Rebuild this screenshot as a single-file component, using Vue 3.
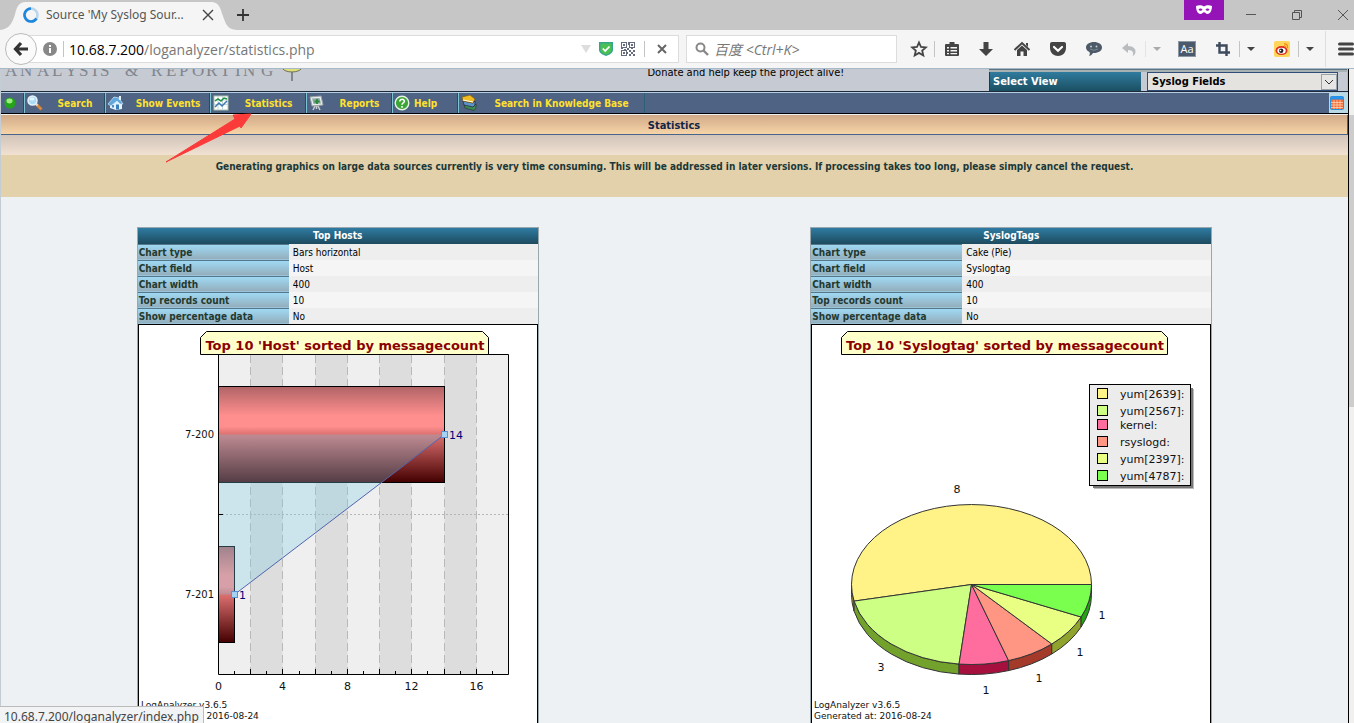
<script setup>
import { ref } from 'vue'

const path = ref('/loganalyzer/statistics.php')
const query = ref('')
const view = ref('Syslog Fields')

const menu = [
  { label: 'Search', icon: 'search', cls: 'w-search' },
  { label: 'Show Events', icon: 'home', cls: 'w-events' },
  { label: 'Statistics', icon: 'stats', cls: 'w-stats' },
  { label: 'Reports', icon: 'report', cls: 'w-reports' },
  { label: 'Help', icon: 'help', cls: 'w-help' },
  { label: 'Search in Knowledge Base', icon: 'books', cls: 'w-kb' },
]

const rows = (type, field) => [
  ['Chart type', type],
  ['Chart field', field],
  ['Chart width', '400'],
  ['Top records count', '10'],
  ['Show percentage data', 'No'],
]
const hostRows = rows('Bars horizontal', 'Host')
const tagRows = rows('Cake (Pie)', 'Syslogtag')

const logo = 'ANALYSIS & REPORTING'
const logoX = [4, 19, 36, 51, 64, 78, 91, 99, 110, 124, 140, 150, 165, 178, 191, 205, 219, 234, 242, 260].join(' ')

const unit = (n) => Math.round(80 + (n * 290) / 18) + 0.5
const bands = [2, 6, 10, 14].map((n) => ({ x: unit(n), w: unit(n + 2) - unit(n) }))
const gridLines = [2, 4, 6, 8, 10, 12, 14, 16].map(unit)
const ticks = Array.from({ length: 17 }, (_, i) => ({ x: unit(i + 1), h: (i + 1) % 2 ? 3 : 5 }))
const axis = [0, 4, 8, 12, 16]

const tags = [
  { name: 'yum[2639]:', n: 8, fill: '#fff388', side: '#a89a34', y: 70, lx: 146, ly: 169 },
  { name: 'yum[2567]:', n: 3, fill: '#ccff83', side: '#72a12c', y: 87, lx: 70, ly: 347 },
  { name: 'kernel:', n: 1, fill: '#ff6d9e', side: '#a5103f', y: 101, lx: 175, ly: 370 },
  { name: 'rsyslogd:', n: 1, fill: '#ff9583', side: '#a33a2a', y: 118, lx: 228, ly: 358 },
  { name: 'yum[2397]:', n: 1, fill: '#e8ff83', side: '#90a32c', y: 135, lx: 269, ly: 332 },
  { name: 'yum[4787]:', n: 1, fill: '#7bff4f', side: '#22a311', y: 152, lx: 291, ly: 295 },
]
const point = (deg, drop = 0) => {
  const a = (deg * Math.PI) / 180
  return `${(160.5 + 120 * Math.cos(a)).toFixed(1)} ${(260.5 - 80 * Math.sin(a) + drop).toFixed(1)}`
}
let at = 0
const slices = tags.map((t) => {
  const from = at
  at += (t.n / 15) * 360
  const to = at
  const big = to - from > 180 ? 1 : 0
  const low = Math.max(from, 180)
  return {
    fill: t.fill,
    sideFill: t.side,
    top: `M160.5 260.5 L${point(from)} A120 80 0 ${big} 0 ${point(to)} Z`,
    side: `M${point(low)} A120 80 0 0 0 ${point(to)} L${point(to, 10)} A120 80 0 0 1 ${point(low, 10)} Z`,
  }
})
</script>

<template>
  <div class="window">
    <header class="tabs">
      <div class="tab">
        <svg class="tab-shape" viewBox="0 0 240 29" preserveAspectRatio="none" aria-hidden="true">
          <path d="M0 29C9 28 12 23 15 14C17 6 19 1 26 1H214C221 1 223 6 225 13C229 24 230 28 240 29Z" fill="#f5f5f5" />
        </svg>
        <svg class="ring" viewBox="0 0 16 16" width="16" height="16" aria-hidden="true">
          <circle cx="8" cy="8" r="6.5" fill="none" stroke="#b9d6ec" stroke-width="2.6" />
          <path d="M8 1.5A6.5 6.5 0 1 0 13.5 11.5" fill="none" stroke="#1c86e0" stroke-width="2.6" />
        </svg>
        <span class="tab-title">Source 'My Syslog Sour...</span>
        <button class="plain tab-close" aria-label="Close tab">
          <svg viewBox="0 0 12 12" width="12" height="12"><path d="M1 1L11 11M11 1L1 11" stroke="#444" stroke-width="1.4" /></svg>
        </button>
      </div>
      <button class="plain new-tab" aria-label="New tab">
        <svg viewBox="0 0 12 12" width="12" height="12"><path d="M6 0V12M0 6H12" stroke="#333" stroke-width="1.8" /></svg>
      </button>
      <div class="mask">
        <svg viewBox="0 0 16 10" width="16" height="10"><path fill="#fff" fill-rule="evenodd" d="M0 1C3-.3 6 .2 8 1.6C10 .2 13-.3 16 1C16 5 14.500 9 11.500 9C9.800 9 9 7.300 8 7.300S6.200 9 4.500 9C1.500 9 0 5 0 1ZM2.500 4.500C3.500 6.200 5.500 6 6.500 4.800C5.500 3 3.500 3 2.500 4.500ZM9.500 4.800C10.500 6 12.500 6.200 13.500 4.500C12.500 3 10.500 3 9.500 4.800Z" /></svg>
      </div>
      <button class="plain win" aria-label="Minimize"><svg viewBox="0 0 12 12" width="12" height="12"><path d="M1 5.500H11" stroke="#555" /></svg></button>
      <button class="plain win" aria-label="Restore"><svg viewBox="0 0 12 12" width="12" height="12"><path d="M1.500 3.500H8.500V10.500H1.500ZM3.500 3V1.500H10.500V8.500H9" fill="none" stroke="#555" /></svg></button>
      <button class="plain win" aria-label="Close"><svg viewBox="0 0 12 12" width="12" height="12"><path d="M1 1L11 11M11 1L1 11" stroke="#555" /></svg></button>
    </header>

    <div class="toolbar">
      <button class="back" aria-label="Back">
        <svg viewBox="0 0 16 16" width="16" height="16"><path d="M8 2L2.500 8L8 14M3 8H15" fill="none" stroke="#333" stroke-width="3.200" /></svg>
      </button>
      <form class="url" @submit.prevent>
        <svg class="info" viewBox="0 0 14 14" width="14" height="14" aria-hidden="true"><circle cx="7" cy="7" r="7" fill="#888" /><path d="M7 6V11M7 3V5" stroke="#fff" stroke-width="2" /></svg>
        <i class="bar"></i>
        <label for="url">10.68.7.200</label>
        <input id="url" v-model="path" type="text" />
        <svg class="drop" viewBox="0 0 10 8" width="10" height="8" aria-hidden="true"><path d="M0 0H10L5 8Z" fill="#ddd" /></svg>
        <svg class="shield" viewBox="0 0 14 14" width="14" height="14" aria-hidden="true"><path d="M0 0H14V8C14 11 10 13 7 14C4 13 0 11 0 8Z" fill="#35a58b" /><path d="M1.500 1.500H12.500V8C12.500 10 9.500 12 7 12.500C4.500 12 1.500 10 1.500 8Z" fill="#4cc054" /><path d="M3.800 6.500L6.200 9L10.500 4.500" fill="none" stroke="#fff" stroke-width="1.800" /></svg>
        <svg class="qr" viewBox="0 0 14 14" width="14" height="14" shape-rendering="crispEdges" aria-hidden="true">
          <path d="M.5.5H5.500V5.500H.5ZM8.500.5H13.500V5.500H8.500ZM.5 8.500H5.500V13.500H.5Z" fill="none" stroke="#666c7c" />
          <path d="M2 2h2v2h-2zM10 2h2v2h-2zM2 10h2v2h-2zM7 0h1v3h-1zM6 6h2v2h-2zM0 6h2v1h-2zM3 7h2v1h-2zM8 8h2v2h-2zM12 8h2v2h-2zM10 10h2v2h-2zM8 12h2v2h-2zM12 12h2v2h-2zM10 6h2v1h-2zM6 10h1v2h-1z" fill="#666c7c" />
        </svg>
        <i class="bar"></i>
        <button class="plain stop" aria-label="Stop"><svg viewBox="0 0 10 10" width="10" height="10"><path d="M1 1L9 9M9 1L1 9" stroke="#666" stroke-width="2" /></svg></button>
      </form>
      <form class="find" @submit.prevent>
        <svg viewBox="0 0 14 14" width="14" height="14" aria-hidden="true"><circle cx="5.500" cy="5.500" r="4" fill="none" stroke="#888" stroke-width="2" /><path d="M8.500 8.500L13 13" stroke="#888" stroke-width="2.400" /></svg>
        <input v-model="query" type="text" aria-label="Search" placeholder="百度 <Ctrl+K>" />
      </form>
      <nav class="tools" aria-label="Browser tools">
        <button class="plain w30" aria-label="Bookmark"><svg viewBox="0 0 16 16" width="16" height="16"><path d="M8 1.500L10 6L14.800 6.400L11.200 9.600L12.300 14.500L8 11.900L3.700 14.500L4.800 9.600L1.200 6.400L6 6Z" fill="none" stroke="#444" stroke-width="1.800" /></svg></button>
        <i class="bar"></i>
        <button class="plain w33" aria-label="Bookmarks list"><svg viewBox="0 0 14 14" width="14" height="14"><path d="M1 2H4.500V0H9.500V2H13Q14 2 14 3V13Q14 14 13 14H1Q0 14 0 13V3Q0 2 1 2ZM2 5V6.500H4V5ZM5.500 5V6.500H12V5ZM2 8V9.500H4V8ZM5.500 8V9.500H12V8ZM2 11V12.300H4V11ZM5.500 11V12.300H12V11Z" fill="#444" fill-rule="evenodd" /></svg></button>
        <button class="plain w36" aria-label="Downloads"><svg viewBox="0 0 14 14" width="14" height="14"><path d="M4.500 0H9.500V7H14L7 14L0 7H4.500Z" fill="#444" /></svg></button>
        <button class="plain w36" aria-label="Home"><svg viewBox="0 0 16 14" width="16" height="14"><path d="M.5 8L8 1L15.500 8" fill="none" stroke="#444" stroke-width="2" /><path d="M12 1H14V5L12 3ZM3 8L8 3.500L13 8V14H9.500V9.500H6.500V14H3Z" fill="#444" /></svg></button>
        <button class="plain w36" aria-label="Pocket"><svg viewBox="0 0 16 14" width="16" height="14"><path d="M2 0H14Q16 0 16 2V6C16 11 12 14 8 14S0 11 0 6V2Q0 0 2 0Z" fill="#444" /><path d="M4 5L8 8.800L12 5" fill="none" stroke="#fff" stroke-width="2.200" stroke-linecap="round" /></svg></button>
        <button class="plain w36" aria-label="Chat"><svg viewBox="0 0 16 14" width="16" height="14"><path d="M8 0C12.500 0 16 2.300 16 5.500S12.500 11 8 11L7 11C6 13 4 14 3 14C4 12.500 4 11.500 3.500 10C1.500 9 0 7.500 0 5.500C0 2.300 3.500 0 8 0Z" fill="#4d5a68" /><circle cx="5" cy="4.500" r="1" fill="#c5ccd3" /><circle cx="10.500" cy="4.500" r="1" fill="#c5ccd3" /><path d="M4 7Q8 9.500 12 7" fill="none" stroke="#7b8793" /></svg></button>
        <button class="plain w33" aria-label="Undo"><svg viewBox="0 0 14 13" width="14" height="13"><path d="M6 0V3C11 3 14 6 13.500 9C13.300 11 12 12.500 10.500 13C12 10 11 7 6 7V10L0 5Z" fill="#b9bcbf" /></svg></button>
        <i class="bar faint"></i>
        <button class="plain w22" aria-label="Undo list"><svg viewBox="0 0 8 4" width="8" height="4"><path d="M0 0H8L4 4Z" fill="#aaa" /></svg></button>
        <button class="plain w38 aa" aria-label="Text"><span>Aa</span></button>
        <button class="plain w33" aria-label="Crop"><svg viewBox="0 0 14 14" width="14" height="14"><path d="M3.500 0V10.500H14M0 3.500H10.500V14" fill="none" stroke="#3d4a5c" stroke-width="2.400" /></svg></button>
        <i class="bar"></i>
        <button class="plain w22" aria-label="Crop list"><svg viewBox="0 0 8 4" width="8" height="4"><path d="M0 0H8L4 4Z" fill="#444" /></svg></button>
        <button class="plain w36 weibo" aria-label="Weibo"><svg viewBox="0 0 16 16" width="16" height="16"><rect width="16" height="16" rx="2" fill="#ffd65a" /><ellipse cx="7.500" cy="9.500" rx="6" ry="4.500" fill="#e22c23" /><ellipse cx="7.500" cy="9.800" rx="4.200" ry="3" fill="#fff" /><circle cx="7.200" cy="9.800" r="2.200" fill="#222" /><circle cx="6.500" cy="9.500" r=".8" fill="#fff" /><path d="M10 3Q14 2.500 13.500 7M10 5Q12 5 11.500 6.500" fill="none" stroke="#f08d1a" stroke-width="1.300" /></svg></button>
        <i class="bar"></i>
        <button class="plain w22" aria-label="Weibo list"><svg viewBox="0 0 8 4" width="8" height="4"><path d="M0 0H8L4 4Z" fill="#444" /></svg></button>
        <i class="bar tall"></i>
        <button class="plain menu-btn" aria-label="Menu"><svg viewBox="0 0 16 14" width="16" height="14"><path d="M1.500 2H14.500M1.500 7H14.500M1.500 12H14.500" stroke="#444" stroke-width="3" stroke-linecap="round" /></svg></button>
      </nav>
    </div>

    <div class="viewport">
      <main class="page">
        <section class="banner">
          <svg class="logo" viewBox="0 0 310 22" width="310" height="22">
            <text :x="logoX" y="7">{{ logo }}</text>
            <ellipse cx="291" cy="-2" rx="10" ry="5" fill="#dfe07a" stroke="#6d7355" />
            <path d="M291 3V12" stroke="#6b7078" stroke-width="1.500" />
          </svg>
          <p>Donate and help keep the project alive!</p>
          <div class="viewpick">
            <label for="view">Select View</label>
            <div class="select-wrap">
              <select id="view" v-model="view"><option>Syslog Fields</option></select>
              <svg viewBox="0 0 16 16" width="16" height="16" aria-hidden="true"><rect x=".5" y=".5" width="15" height="15" fill="#e6e6e4" stroke="#9aa3ab" /><path d="M4 6L8 10L12 6" fill="none" stroke="#333" /></svg>
            </div>
          </div>
        </section>

        <nav class="menu" aria-label="Main menu">
          <span class="dot"><svg viewBox="0 0 12 12" width="12" height="12"><circle cx="6" cy="6" r="5.500" fill="#25a31b" /><ellipse cx="5.500" cy="4" rx="3" ry="2.400" fill="#9bed7d" /></svg></span>
          <a v-for="m in menu" :key="m.label" href="#" :class="m.cls">
            <svg viewBox="0 0 16 16" width="16" height="16" aria-hidden="true">
              <template v-if="m.icon === 'search'"><path d="M9 9L14.500 14.500" stroke="#d6873c" stroke-width="3" /><path d="M8.500 8.500L10.500 10.500" stroke="#ddd" stroke-width="2" /><circle cx="5.500" cy="5.500" r="4.500" fill="#a9dcf8" stroke="#e8f2f8" stroke-width="1.500" /><ellipse cx="5" cy="4" rx="2.500" ry="1.500" fill="#e5f6ff" /></template>
              <template v-else-if="m.icon === 'home'"><path d="M2 8L7 4L14 9V14L8 15L2 13Z" fill="#e6f1fa" /><path d="M0 9L6 2L11 3L15 9L12 9L9 6L3 11Z" fill="#5fa8dd" stroke="#d4eaf9" stroke-width=".7" /><path d="M8 9.500H11V14.500H8Z" fill="#3780bd" /><path d="M4 10H6V12.500H4Z" fill="#4d8fc6" /><path d="M11 1H13V5H11Z" fill="#e4eef6" /></template>
              <template v-else-if="m.icon === 'stats'"><rect x="1" y="1" width="14" height="14" fill="#fff" stroke="#a9c3a9" /><path d="M5 1V15M9.500 1V15M1 5H15M1 9.500H15" stroke="#bdd8d8" /><path d="M2 6L5 4L8 6L11 3L14 4" fill="none" stroke="#209140" stroke-width="1.500" /><path d="M2 12L6 8L9 11L14 6" fill="none" stroke="#3c78b4" stroke-width="1.500" /></template>
              <template v-else-if="m.icon === 'report'"><path d="M6 11L4 15M9 11L11 15M7.500 10V14" stroke="#c9ced2" stroke-width="1.500" /><path d="M1 2L12 1L14 10L3 11Z" fill="#e8ecec" stroke="#9ba5a8" /><path d="M3 3.500L10.500 3L12 8.500L4.500 9Z" fill="#8fa9a6" /><path d="M8 4V9M5.500 6.500H10.500" stroke="#298a3c" stroke-width="1.800" /></template>
              <template v-else-if="m.icon === 'help'"><circle cx="8" cy="8" r="6.800" fill="#3da637" stroke="#e4f3e2" stroke-width="1.400" /><path d="M5.800 6.500C5.800 3.500 10.500 3.700 10.300 6.500C10.200 8 8 8 8 9.800M8 11V12.700" fill="none" stroke="#fff" stroke-width="1.600" /></template>
              <template v-else><path d="M3 9L13 11L15 9V13L13 15.500L4 13Z" fill="#3d8a55" stroke="#223e2c" stroke-width=".7" /><path d="M2 6L12 8L14 6V10L12 12L3 10Z" fill="#5c92ca" stroke="#223" stroke-width=".7" /><path d="M1 2L9 0L14 4L12 8L2 6Z" fill="#f0bc22" stroke="#795d14" stroke-width=".7" /><path d="M2 5L12 7" stroke="#fff" /></template>
            </svg>
            <span>{{ m.label }}</span>
          </a>
          <i class="menu-fill"></i>
          <button class="plain cal" aria-label="Calendar"><svg viewBox="0 0 14 14" width="14" height="14"><rect x=".5" y=".5" width="13" height="13" rx="1" fill="#f26a38" stroke="#2793de" /><path d="M1 2H13" stroke="#2793ee" stroke-width="3" /><path d="M4 4V13M7 4V13M10 4V13M1 6.500H13M1 9H13M1 11.500H13" stroke="#ffd2b0" stroke-width=".8" /></svg></button>
        </nav>

        <h1>Statistics</h1>
        <div class="fade"></div>
        <p class="notice">Generating graphics on large data sources currently is very time consuming. This will be addressed in later versions. If processing takes too long, please simply cancel the request.</p>

        <section class="charts">
          <article class="card">
            <table>
              <colgroup><col class="names" /><col /></colgroup>
              <thead><tr><th colspan="2" class="head">Top Hosts</th></tr></thead>
              <tbody><tr v-for="r in hostRows" :key="r[0]"><th scope="row">{{ r[0] }}</th><td>{{ r[1] }}</td></tr></tbody>
            </table>
            <svg class="chart" viewBox="0 0 400 410" width="400" height="410">
              <defs>
                <linearGradient id="bar" x1="0" y1="0" x2="0" y2="1">
                  <stop offset="0" stop-color="#b06466" /><stop offset=".3" stop-color="#ff8e8e" /><stop offset=".42" stop-color="#ff8e8e" /><stop offset=".5" stop-color="#dd7070" /><stop offset="1" stop-color="#440000" />
                </linearGradient>
              </defs>
              <rect x=".5" y=".5" width="399" height="420" fill="#fff" stroke="#000" />
              <rect x="80.500" y="30.500" width="290" height="320" fill="#efefef" />
              <rect v-for="b in bands" :key="b.x" :x="b.x" y="30" :width="b.w" height="320" fill="#ddd" />
              <path v-for="g in gridLines" :key="g" :d="`M${g} 31V350`" stroke="#b9b9b9" stroke-dasharray="8 4" />
              <path d="M80 190.500H370" stroke="#b5b5b5" stroke-dasharray="2 2" />
              <rect x="80.500" y="62.500" width="226" height="96" fill="url(#bar)" stroke="#000" />
              <rect x="80.500" y="222.500" width="16" height="96" fill="url(#bar)" stroke="#000" />
              <path d="M80.500 110.500H306.500L96.500 270.500H80.500Z" fill="#7acae5" fill-opacity=".3" />
              <path d="M306.500 110.500L96.500 270.500" stroke="#5265ad" />
              <path d="M80.500 30.500H370.500V350.500H80.500ZM80 190.500H85" fill="none" stroke="#000" />
              <path v-for="t in ticks" :key="t.x" :d="`M${t.x} 350V${350 - t.h}`" stroke="#000" />
              <rect x="303.500" y="107.500" width="6" height="6" fill="#a5d2f2" stroke="#5b8fd6" />
              <rect x="93.500" y="267.500" width="6" height="6" fill="#a5d2f2" stroke="#5b8fd6" />
              <text class="val" x="311" y="115">14</text>
              <text class="val" x="101" y="275">1</text>
              <text class="small" x="76" y="114" text-anchor="end">7-200</text>
              <text class="small" x="76" y="274" text-anchor="end">7-201</text>
              <text v-for="a in axis" :key="a" class="lab" :x="unit(a)" y="366" text-anchor="middle">{{ a }}</text>
              <path class="tag" d="M62.500 30.500V13.500L68.500 7.500H344.500L350.500 13.500V30.500Z" />
              <text class="title" x="207" y="26" text-anchor="middle">Top 10 'Host' sorted by messagecount</text>
              <text class="foot" x="3" y="384">LogAnalyzer v3.6.5</text>
              <text class="foot" x="3" y="395">Generated at: 2016-08-24</text>
            </svg>
          </article>

          <article class="card">
            <table>
              <colgroup><col class="names" /><col /></colgroup>
              <thead><tr><th colspan="2" class="head">SyslogTags</th></tr></thead>
              <tbody><tr v-for="r in tagRows" :key="r[0]"><th scope="row">{{ r[0] }}</th><td>{{ r[1] }}</td></tr></tbody>
            </table>
            <svg class="chart" viewBox="0 0 400 410" width="400" height="410">
              <rect x=".5" y=".5" width="399" height="420" fill="#fff" stroke="#000" />
              <path class="tag" d="M30.500 30.500V13.500L36.500 7.500H350.500L356.500 13.500V30.500Z" />
              <text class="title" x="194" y="26" text-anchor="middle">Top 10 'Syslogtag' sorted by messagecount</text>
              <path v-for="s in slices" :key="s.side" :d="s.side" :fill="s.sideFill" stroke="#333" />
              <path v-for="s in slices" :key="s.top" :d="s.top" :fill="s.fill" stroke="#333" />
              <rect x="283" y="65" width="100" height="100" fill="#bbb" />
              <rect x="282" y="64" width="100" height="100" fill="#777" />
              <rect x="278.500" y="60.500" width="101" height="101" fill="#ececec" stroke="#000" />
              <g v-for="t in tags" :key="t.name">
                <rect x="286.500" :y="t.y - 5.500" width="10" height="10" :fill="t.fill" stroke="#000" />
                <text class="lab" x="309" :y="t.y + 4">{{ t.name }}</text>
                <text class="lab" :x="t.lx" :y="t.ly" text-anchor="middle">{{ t.n }}</text>
              </g>
              <text class="foot" x="3" y="384">LogAnalyzer v3.6.5</text>
              <text class="foot" x="3" y="395">Generated at: 2016-08-24</text>
            </svg>
          </article>
        </section>
      </main>
      <div class="scroll"><div class="thumb"></div></div>
      <svg class="pointer" viewBox="0 0 88 50" width="88" height="50" aria-hidden="true"><path d="M86 1L68 2L70 6L1 49L75 13L76 15Z" fill="#fb3a3a" stroke="#fb3a3a" stroke-linejoin="round" /></svg>
      <div class="status">10.68.7.200/loganalyzer/index.php</div>
    </div>
  </div>
</template>

<style>
body { margin: 0; overflow: hidden; }
</style>

<style scoped>
* { box-sizing: border-box; }
.window { height: 100vh; display: flex; flex-direction: column; overflow: hidden; background: #edf1f4; font-family: "DejaVu Sans Condensed", "DejaVu Sans", sans-serif; font-size: 10px; color: #000; }
svg { display: block; flex: none; overflow: visible; }
p, h1 { margin: 0; }
.plain { display: flex; align-items: center; justify-content: center; padding: 0; border: 0; background: none; }
.bar { flex: none; width: 1px; height: 16px; background: #c4c4c4; }
.faint { background: #e4e4e4; }
.tall { height: 36px; margin-left: 4px; background: #ddd; }

.tabs { flex: none; height: 30px; display: flex; align-items: center; background: #c6c6c6; }
.tab { position: relative; width: 237px; height: 30px; display: flex; align-items: center; padding: 1px 23px; gap: 7px; }
.tab-shape { position: absolute; left: 0; top: 1px; width: 100%; height: 29px; }
.ring, .tab-title, .tab-close { position: relative; }
.tab-title { flex: 1; white-space: nowrap; font: 12px/20px "Noto Sans", "Open Sans", sans-serif; color: #555; }
.new-tab { margin-right: auto; }
.mask { align-self: flex-start; width: 40px; height: 20px; margin-right: 4px; display: flex; align-items: center; justify-content: center; background: #9414b8; }
.win { width: 46px; height: 28px; }
.win:last-child { margin-right: -12px; }

.toolbar { flex: none; height: 39px; display: flex; align-items: center; padding-left: 5px; background: #f5f5f5; border-bottom: 1px solid #a7b9c6; font-family: "Open Sans", "Noto Sans CJK SC", sans-serif; }
.back { position: relative; z-index: 1; flex: none; width: 32px; height: 32px; display: flex; align-items: center; justify-content: center; padding: 0; border: 1px solid #bbb; border-radius: 50%; background: #fafafa; }
.url, .find { height: 28px; display: flex; align-items: center; background: #fff; border: 1px solid #dcdcdc; }
.url { flex: 1; min-width: 0; margin-left: -8px; padding-left: 14px; border-left: 0; color: #777; font-size: 14px; }
.url .info { margin-right: 6px; }
.url label { margin-left: 5px; color: #000; }
.url input, .find input { flex: 1; min-width: 0; padding: 0; border: 0; outline: 0; background: none; font: inherit; color: inherit; }
.shield { margin: 0 8px; }
.qr { margin-right: 9px; }
.stop { width: 33px; height: 26px; }
.find { width: 211px; margin: 0 7px; padding-left: 8px; gap: 5px; font-size: 14px; font-style: italic; }
.find input::placeholder { color: #777; opacity: 1; }
.tools { flex: none; display: flex; align-items: center; height: 38px; }
.tools .plain { height: 30px; }
.w22 { width: 22px; } .w30 { width: 30px; } .w33 { width: 33px; } .w36 { width: 36px; } .w38 { width: 38px; }
.aa span { width: 16px; height: 14px; background: #4a5a6c; color: #fff; font: 11px/13px "Open Sans", sans-serif; outline: 1px solid #8b96a2; }
.weibo { padding-left: 4px; }
.tools .menu-btn { width: 28px; padding-left: 12px; }

.viewport { position: relative; flex: 1; min-height: 0; display: flex; overflow: hidden; }
.page { flex: 1; min-width: 0; border-left: 1px solid #c4ccd4; border-right: 1px solid #000; }
.banner { height: 22px; display: flex; align-items: flex-start; overflow: hidden; background: #c6cad2; border-right: 1px solid #b5bcc8; }
.logo text { font: 17px "Liberation Serif", serif; fill: #80858e; }
.banner p { flex: 1; height: 22px; line-height: 16px; margin-top: -4px; padding-left: 25%; white-space: nowrap; font-size: 11px; }
.viewpick { flex: none; width: 358px; height: 22px; display: flex; gap: 6px; padding-right: 9px; border-top: 1px solid #5b7484; background: linear-gradient(#a9b2b2 2px, transparent 2px); padding-top: 2px; }
.viewpick label { width: 152px; height: 19px; padding-left: 3px; line-height: 20px; font-weight: bold; font-size: 11px; color: #fff; background: linear-gradient(#2f7b9e, #1b4f62); border-left: 1px solid #12404f; }
.select-wrap { position: relative; flex: 1; }
.select-wrap select { appearance: none; display: block; width: 100%; height: 19px; padding: 1px 4px 0; border: 1px solid #2f4d78; border-radius: 0; background: #e4e3df; font: bold 11px/16px "DejaVu Sans Condensed", sans-serif; color: #000; }
.select-wrap svg { position: absolute; right: 1px; top: 2px; pointer-events: none; }

.menu { height: 23px; display: flex; border-top: 1px solid #1e2a3c; border-bottom: 1px solid #000; box-shadow: inset 0 1px #b5cfe0; background: #4f6484; padding-top: 1px; }
.menu a, .dot { flex: none; display: flex; align-items: center; color: #ffe12e; text-decoration: none; font-weight: bold; }
.dot { width: 23px; padding-left: 3px; }
.menu a { padding-left: 2px; border-left: 1px solid #7ec3d2; box-shadow: -1px 0 #1f4f63; }
.menu a span { flex: 1; padding-left: 2px; text-align: center; }
.menu .w-help { padding-left: 1px; }
.menu .w-help span { padding-left: 4px; text-align: left; }
.w-search { width: 81px; } .w-events { width: 105px; } .w-stats { width: 96px; } .w-reports { width: 86px; } .w-help { width: 66px; } .w-kb { width: 186px; }
.menu-fill { flex: 1; border-left: 1px solid #2c6274; }
.plain.cal { width: 19px; padding-right: 3px; background: #b9d9e4; }

h1 { margin-top: 1px; height: 20px; line-height: 21px; text-align: center; font-size: 11px; color: #10254a; background: linear-gradient(#d0aa88, #f6d4a8); border: 1px solid #46658a; border-width: 0 1px 1px 0; }
.fade { height: 20px; background: linear-gradient(#d3c4bb, #f0e1d1); }
.notice { height: 42px; padding-top: 4px; line-height: 16px; text-align: center; font-weight: bold; color: #1c3838; background: #e2d1ab; }

.charts { display: grid; grid-template-columns: 1fr 1fr; justify-items: center; padding-top: 30px; }
.card { width: 402px; border: 1px solid #9aa8ae; border-bottom: 0; }
table { width: 100%; border-collapse: collapse; table-layout: fixed; line-height: 15px; }
.names { width: 151px; }
th, td { height: 16px; padding: 0; }
.head { height: 16px; text-align: center; color: #fff; background: linear-gradient(#2f7ba2, #1d4b5f); }
tbody th { text-align: left; padding-left: 1px; color: #24392f; background: linear-gradient(#9fdaf5, #93adba); border-top: 1px solid #55788a; }
tbody th, .head { font-weight: bold; }
td { padding-left: 4px; background: #f5f5f5; }
tbody tr:nth-child(odd) td { background: #eee; }
.chart text { font-family: "DejaVu Sans", sans-serif; fill: #111; }
.chart .small { font-size: 10px; }
.chart .lab { font-size: 11px; }
.chart .val { font-size: 11px; fill: #00007f; }
.chart .foot { font-size: 9px; }
.chart .title { font-size: 13px; font-weight: bold; fill: #8b0000; }
.tag { fill: #ffffcc; stroke: #000; }

.scroll { flex: none; width: 5px; padding-top: 46px; background: #f0f0f0; }
.thumb { height: 292px; background: #cdcdcd; }
.pointer { position: absolute; left: 165px; top: 44px; }
.status { position: absolute; left: 0; bottom: 0; height: 17px; padding: 0 4px; line-height: 20px; overflow: hidden; background: #f2f3f4; border-top: 1px solid #bbb; border-right: 1px solid #bbb; color: #444; font-family: "Noto Sans", "Open Sans", sans-serif; font-size: 12px; }
</style>
